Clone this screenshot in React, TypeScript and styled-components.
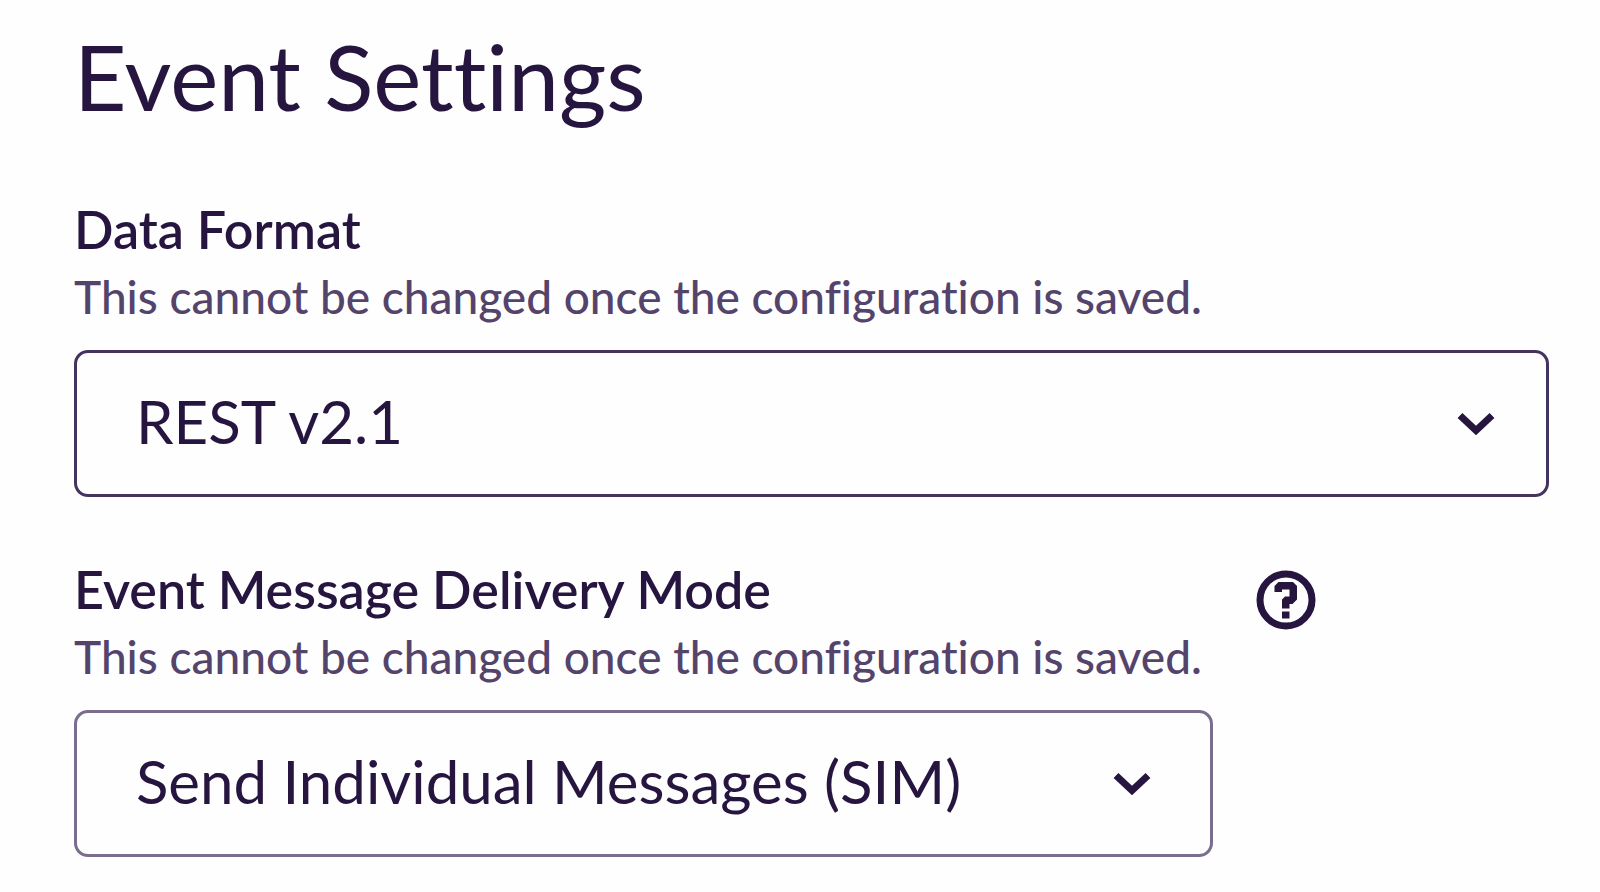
import React from "react";
import styled, { createGlobalStyle } from "styled-components";

const ink = "#26153f";
const inkSoft = "#54446b";

const GlobalStyle = createGlobalStyle`
  *, *::before, *::after { box-sizing: border-box; }
  body {
    margin: 0;
    background: #fefeff;
    color: ${ink};
    font-family: Lato, "Open Sans", sans-serif;
    font-variant-ligatures: none;
  }
`;

const Page = styled.main`
  display: flex;
  flex-direction: column;
  padding: 21px 51px 32px 74px;
`;

const Title = styled.h1`
  margin: 0 0 66px;
  font-size: 91px;
  line-height: 110px;
  font-weight: 400;
`;

const Fields = styled.div`
  display: flex;
  flex-direction: column;
  gap: 60px;
`;

const FieldRow = styled.div`
  display: flex;
  align-items: flex-start;
  gap: 43px;
`;

const Field = styled.div<{ $width?: string }>`
  display: flex;
  flex-direction: column;
  flex: ${(p) => (p.$width ? `0 1 ${p.$width}` : "1 1 auto")};
  min-width: 0;
`;

const Label = styled.label`
  margin-bottom: 6px;
  font-size: 52px;
  line-height: 64px;
  font-weight: 600;
`;

const Hint = styled.p`
  margin: 0 0 23px;
  color: ${inkSoft};
  font-size: 46px;
  line-height: 60px;
  font-weight: 500;
`;

const SelectBox = styled.div`
  display: grid;
  align-items: center;

  > * { grid-area: 1 / 1; }
`;

const Select = styled.select<{ $strong?: boolean }>`
  appearance: none;
  width: 100%;
  height: 147px;
  margin: 0;
  padding: 0 120px 6px 59px;
  border: 3px solid ${(p) => (p.$strong ? "#44335e" : "#7b6e8d")};
  border-radius: 14px;
  background: transparent;
  color: ${ink};
  font-family: inherit;
  font-size: 60px;
  font-weight: 400;
`;

const Chevron = styled.svg<{ $inset: number }>`
  justify-self: end;
  width: 38px;
  height: 24px;
  margin-right: ${(p) => p.$inset}px;
  pointer-events: none;
`;

const HelpButton = styled.button`
  flex: none;
  width: 60px;
  height: 60px;
  margin: 13px 0 0;
  padding: 0;
  border: 0;
  background: none;
  color: inherit;
  cursor: pointer;

  svg { display: block; }
`;

type DropdownProps = { id: string; strong?: boolean; inset: number; value: string };

function Dropdown({ id, strong, inset, value }: DropdownProps) {
  return (
    <SelectBox>
      <Select id={id} aria-describedby={`${id}-hint`} $strong={strong} defaultValue={value}>
        <option>{value}</option>
      </Select>
      <Chevron $inset={inset} viewBox="0 0 38 24" aria-hidden="true">
        <path d="M3 3.500 19 18.500 35 3.500" fill="none" stroke={ink} strokeWidth="7" />
      </Chevron>
    </SelectBox>
  );
}

const hint = "This cannot be changed once the configuration is saved.";

export default function App() {
  return (
    <>
      <GlobalStyle />
      <Page>
        <Title>Event Settings</Title>
        <Fields>
          <FieldRow>
            <Field>
              <Label htmlFor="format">Data Format</Label>
              <Hint id="format-hint">{hint}</Hint>
              <Dropdown id="format" strong inset={54} value="REST v2.1" />
            </Field>
          </FieldRow>
          <FieldRow>
            <Field $width="1139px">
              <Label htmlFor="mode">Event Message Delivery Mode</Label>
              <Hint id="mode-hint">{hint}</Hint>
              <Dropdown id="mode" inset={62} value="Send Individual Messages (SIM)" />
            </Field>
            <HelpButton type="button" aria-label="Help">
              <svg width="60" height="60" viewBox="0 0 60 60" aria-hidden="true">
                <circle cx="30" cy="30" r="26" fill="none" stroke={ink} strokeWidth="7" />
                <path
                  d="M18.500 22V16L22.500 12H37L41 16V29.500L36.500 34H33.500V38.500H26V29.500L29 26.500H33.500V19.500H26V22Z"
                  fill={ink}
                />
                <path d="M26 41.500H33.500V48.500H26Z" fill={ink} />
              </svg>
            </HelpButton>
          </FieldRow>
        </Fields>
      </Page>
    </>
  );
}
